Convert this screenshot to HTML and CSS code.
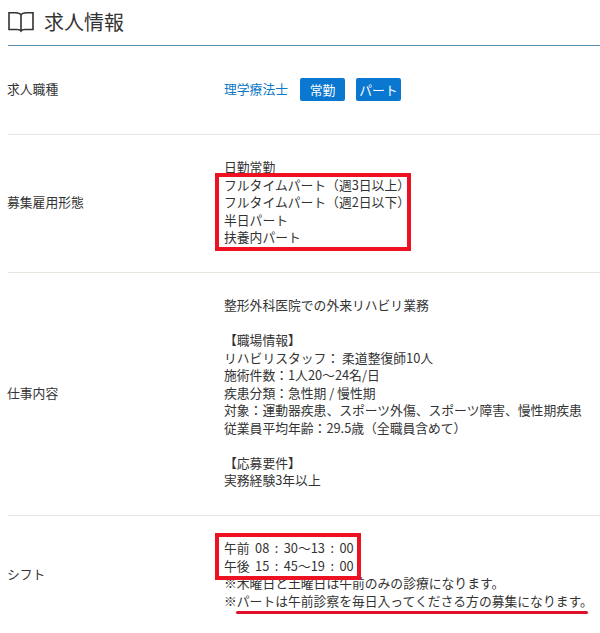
FILE: index.html
```html
<!DOCTYPE html>
<html lang="ja">
<head>
<meta charset="utf-8">
<title>求人情報</title>
<link rel="stylesheet" href="styles.css">
</head>
<body>
<h2 class="heading">
  <svg class="book" width="26" height="22" viewBox="0 0 26 22" fill="none" stroke="#333" stroke-width="1.6">
    <path d="M13 4.2C12 2.2 10 1.8 7.500 1.800H1V18.500H9C11 18.500 12.300 18.800 13 20C13.700 18.800 15 18.500 17 18.500H25V1.800H18.500C16 1.800 14 2.200 13 4.200V20"/>
  </svg>
  <span>求人情報</span>
</h2>
<div class="row row-type">
  <div class="label">求人職種</div>
  <div class="value type-value">
    <a class="link">理学療法士</a>
    <span class="tag">常勤</span>
    <span class="tag">パート</span>
  </div>
</div>
<div class="row">
  <div class="label">募集雇用形態</div>
  <div class="value">
    <div>日勤常勤</div>
    <div class="boxed box-employ">
      <div>フルタイムパート（週3日以上）</div>
      <div>フルタイムパート（週2日以下）</div>
      <div>半日パート</div>
      <div>扶養内パート</div>
    </div>
  </div>
</div>
<div class="row">
  <div class="label">仕事内容</div>
  <div class="value">
    <div>整形外科医院での外来リハビリ業務</div>
    <div class="blank"></div>
    <div>【職場情報】</div>
    <div>リハビリスタッフ： 柔道整復師10人</div>
    <div>施術件数：1人20～24名/日</div>
    <div>疾患分類：急性期 / 慢性期</div>
    <div>対象：運動器疾患、スポーツ外傷、スポーツ障害、慢性期疾患</div>
    <div>従業員平均年齢：29.5歳（全職員含めて）</div>
    <div class="blank"></div>
    <div>【応募要件】</div>
    <div>実務経験3年以上</div>
  </div>
</div>
<div class="row row-last">
  <div class="label">シフト</div>
  <div class="value">
    <div class="boxed box-shift">
      <div class="time">午前 08 : 30～13 : 00</div>
      <div class="time">午後 15 : 45～19 : 00</div>
    </div>
    <div>※木曜日と土曜日は午前のみの診療になります。</div>
    <div class="note">※パートは午前診察を毎日入ってくださる方の募集になります。<i class="underline"></i></div>
  </div>
</div>
</body>
</html>
```
FILE: styles.css
```css
html, body {
  margin: 0;
  padding: 0;
  background: #fff;
}
body {
  width: 600px;
  height: 633px;
  overflow: hidden;
  box-sizing: border-box;
  padding-left: 8px;
  font-family: "Noto Sans CJK JP", "Noto Sans", sans-serif;
  font-size: 12.8px;
  line-height: 17.5px;
  color: #333;
}
.heading {
  display: flex;
  align-items: center;
  gap: 10px;
  height: 46px;
  margin: 0;
  box-sizing: border-box;
  border-bottom: 1px solid #5b8fb0;
  font-size: 20px;
  font-weight: 400;
  line-height: 24px;
  padding-bottom: 2px;
}
.book {
  display: block;
  flex: none;
}
.row {
  display: flex;
  align-items: center;
  padding: 23px 0 26.5px;
  border-bottom: 1px solid #e8e6df;
}
.row-type {
  padding: 0 0 2px;
  box-sizing: border-box;
  height: 89px;
}
.row-last {
  border-bottom: 0;
}
.label {
  width: 217px;
  margin-left: -1px;
  flex: none;
}
.value {
  flex: 1;
  position: relative;
}
.type-value {
  display: flex;
  align-items: center;
  gap: 11px;
}
.link {
  color: #0a78c8;
  margin-right: 1px;
}
.tag {
  display: block;
  height: 23px;
  line-height: 23px;
  min-width: 45px;
  box-sizing: border-box;
  text-align: center;
  color: #fff;
  background: #0a78d0;
  border-radius: 2px;
}
.blank {
  height: 17.5px;
}
.boxed {
  position: relative;
}
.boxed::after {
  content: "";
  position: absolute;
  left: -9px;
  border: 4px solid #ee1122;
  box-sizing: border-box;
  pointer-events: none;
}
.box-employ::after {
  top: -2.5px;
  width: 196px;
  height: 78px;
}
.box-shift::after {
  top: -6.5px;
  width: 146px;
  height: 47px;
}
.time {
  word-spacing: 2.6px;
}
.note {
  position: relative;
}
.underline {
  position: absolute;
  left: 12px;
  top: 19px;
  width: 352px;
  height: 3px;
  background: #e0102a;
  border-radius: 2px;
}
```
